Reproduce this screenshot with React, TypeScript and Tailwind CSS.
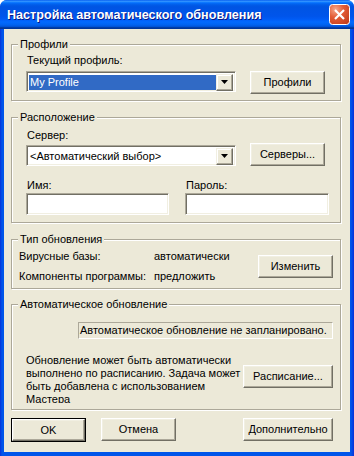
import type { ReactNode } from "react";

const face = "bg-[#ece9d8]";

function Btn({ label, w, def, className = "" }: { label: string; w: string; def?: boolean; className?: string }) {
  const inner = (
    <div className={`flex h-full w-full items-center justify-center border border-t-white border-l-white border-r-[#716f64] border-b-[#716f64] shadow-[inset_-1px_-1px_0_#aca899,inset_1px_1px_0_#f1efe2] ${face}`}>
      {label}
    </div>
  );
  return def ? (
    <div className={`h-[24px] shrink-0 border border-black ${w} ${className}`}>{inner}</div>
  ) : (
    <div className={`h-[23px] shrink-0 ${w} ${className}`}>{inner}</div>
  );
}

function DropArrow() {
  return (
    <div className={`flex h-[17px] w-[17px] shrink-0 items-center justify-center border border-t-[#f1efe2] border-l-[#f1efe2] border-r-[#716f64] border-b-[#716f64] shadow-[inset_-1px_-1px_0_#aca899,inset_1px_1px_0_#fff] ${face}`}>
      <svg width="7" height="4" viewBox="0 0 7 4">
        <path d="M0 0h7L3.5 4z" fill="#000" />
      </svg>
    </div>
  );
}

function Combo({ text, selected }: { text: string; selected?: boolean }) {
  return (
    <div className="flex h-[21px] w-[210px] shrink-0 items-center border border-t-[#aca899] border-l-[#aca899] border-b-white border-r-white bg-white p-[1px] shadow-[inset_1px_1px_0_#716f64,inset_-1px_-1px_0_#f1efe2]">
      <div className="flex h-full flex-1 items-center pl-[1px] pt-[1px]">
        <div className={`flex h-[15px] w-full items-center pl-[1px] ${selected ? "bg-[#316ac5] text-white" : ""}`}>{text}</div>
      </div>
      <div className="pr-[1px] pt-[1px]">
        <DropArrow />
      </div>
    </div>
  );
}

function Edit({ w }: { w: string }) {
  return (
    <div className={`h-[22px] shrink-0 border border-t-[#aca899] border-l-[#aca899] border-b-white border-r-white bg-white shadow-[inset_1px_1px_0_#716f64,inset_-1px_-1px_0_#f1efe2] ${w}`} />
  );
}

function Group({ title, className, children }: { title: string; className: string; children: ReactNode }) {
  return (
    <div className={`relative ml-[7px] w-[330px] border border-[#aca899] shadow-[inset_1px_1px_0_#fff,1px_1px_0_#fff] ${className}`}>
      <div className={`absolute left-[6px] top-[-7px] px-[2px] leading-[13px] ${face}`}>{title}</div>
      {children}
    </div>
  );
}

function CloseBtn() {
  return (
    <svg width="21" height="21" viewBox="0 0 21 21" className="block shrink-0">
      <defs>
        <radialGradient id="cb" cx="0.3" cy="0.25" r="0.9">
          <stop offset="0" stopColor="#f6a88c" />
          <stop offset="0.45" stopColor="#e35c36" />
          <stop offset="1" stopColor="#c23d1b" />
        </radialGradient>
      </defs>
      <rect x="0.5" y="0.5" width="20" height="20" rx="3" fill="url(#cb)" stroke="#ffffff" />
      <path d="M6 6l9 9M15 6l-9 9" stroke="#ffffff" strokeWidth="2.2" />
    </svg>
  );
}

export default function App() {
  return (
    <div className="flex h-[456px] w-[354px] flex-col overflow-hidden rounded-t-[7px] bg-[linear-gradient(90deg,#0831d9_0px,#0055ea_2px,#0055ea_351px,#0831d9_354px)] font-['Liberation_Sans',Arial,sans-serif] text-[11px] leading-[13px] text-black">
      {/* title bar */}
      <div className="flex h-[29px] shrink-0 items-center bg-[linear-gradient(180deg,#0058ee_0%,#3593ff_4%,#288eff_6%,#127dff_8%,#036ffc_10%,#0262ee_14%,#0057e5_20%,#0054e3_24%,#0055eb_56%,#005bf5_66%,#026afe_76%,#0062ef_86%,#0052d6_92%,#0040ab_94%,#003092_100%)] pl-[7px] pr-[4px]">
        <div className="flex-1 pt-[1px] text-[12.6px] font-bold text-white [text-shadow:1px_1px_0_#0a1883]">
          Настройка автоматического обновления
        </div>
        <CloseBtn />
      </div>

      {/* client */}
      <div className={`mx-[4px] mb-[4px] flex flex-1 flex-col ${face}`}>
        <Group title="Профили" className="mt-[15px] h-[57px]">
          <div className="pl-[15px] pt-[9px]">Текущий профиль:</div>
          <div className="mt-[4px] flex items-start pl-[14px]">
            <Combo text="My Profile" selected />
            <Btn label="Профили" w="w-[75px]" className="ml-[14px]" />
          </div>
        </Group>

        <Group title="Расположение" className="mt-[16px] h-[106px]">
          <div className="pl-[15px] pt-[11px]">Сервер:</div>
          <div className="mt-[1px] flex items-start pl-[14px]">
            <div className="pt-[2px]">
              <Combo text="<Автоматический выбор>" />
            </div>
            <Btn label="Серверы..." w="w-[75px]" className="ml-[14px]" />
          </div>
          <div className="mt-[13px] flex pl-[14px]">
            <div className="w-[159px]">
              <div className="pl-[1px]">Имя:</div>
              <div className="mt-[1px]">
                <Edit w="w-[143px]" />
              </div>
            </div>
            <div>
              <div className="pl-[1px]">Пароль:</div>
              <div className="mt-[1px]">
                <Edit w="w-[144px]" />
              </div>
            </div>
          </div>
        </Group>

        <Group title="Тип обновления" className="mt-[16px] flex h-[50px]">
          <div className="grid grid-cols-[135px_auto] pl-[7px] pt-[8px] leading-[16px]">
            <div>Вирусные базы:</div>
            <div>автоматически</div>
            <div>Компоненты программы:</div>
            <div>предложить</div>
          </div>
          <Btn label="Изменить" w="w-[75px]" className="ml-auto mr-[7px] mt-[15px]" />
        </Group>

        <Group title="Автоматическое обновление" className="mt-[15px] h-[106px]">
          <div className="ml-[66px] mt-[17px] flex h-[17px] w-[255px] items-center border border-t-[#aca899] border-l-[#aca899] border-b-white border-r-white pl-[1px]">
            Автоматическое обновление не запланировано.
          </div>
          <div className="mt-[15px] flex items-start pl-[14px]">
            <div className="h-[49px] w-[217px] overflow-hidden">
              Обновление может быть автоматически
              <br />
              выполнено по расписанию. Задача может
              <br />
              быть добавлена с использованием
              <br />
              Мастера
            </div>
            <Btn label="Расписание..." w="w-[90px]" className="mt-[11px]" />
          </div>
        </Group>

        <div className="mt-[8px] flex pl-[7px]">
          <Btn label="OK" w="w-[75px]" def />
          <Btn label="Отмена" w="w-[75px]" className="ml-[15px]" />
          <Btn label="Дополнительно" w="w-[90px]" className="ml-auto mr-[17px]" />
        </div>
      </div>
    </div>
  );
}
